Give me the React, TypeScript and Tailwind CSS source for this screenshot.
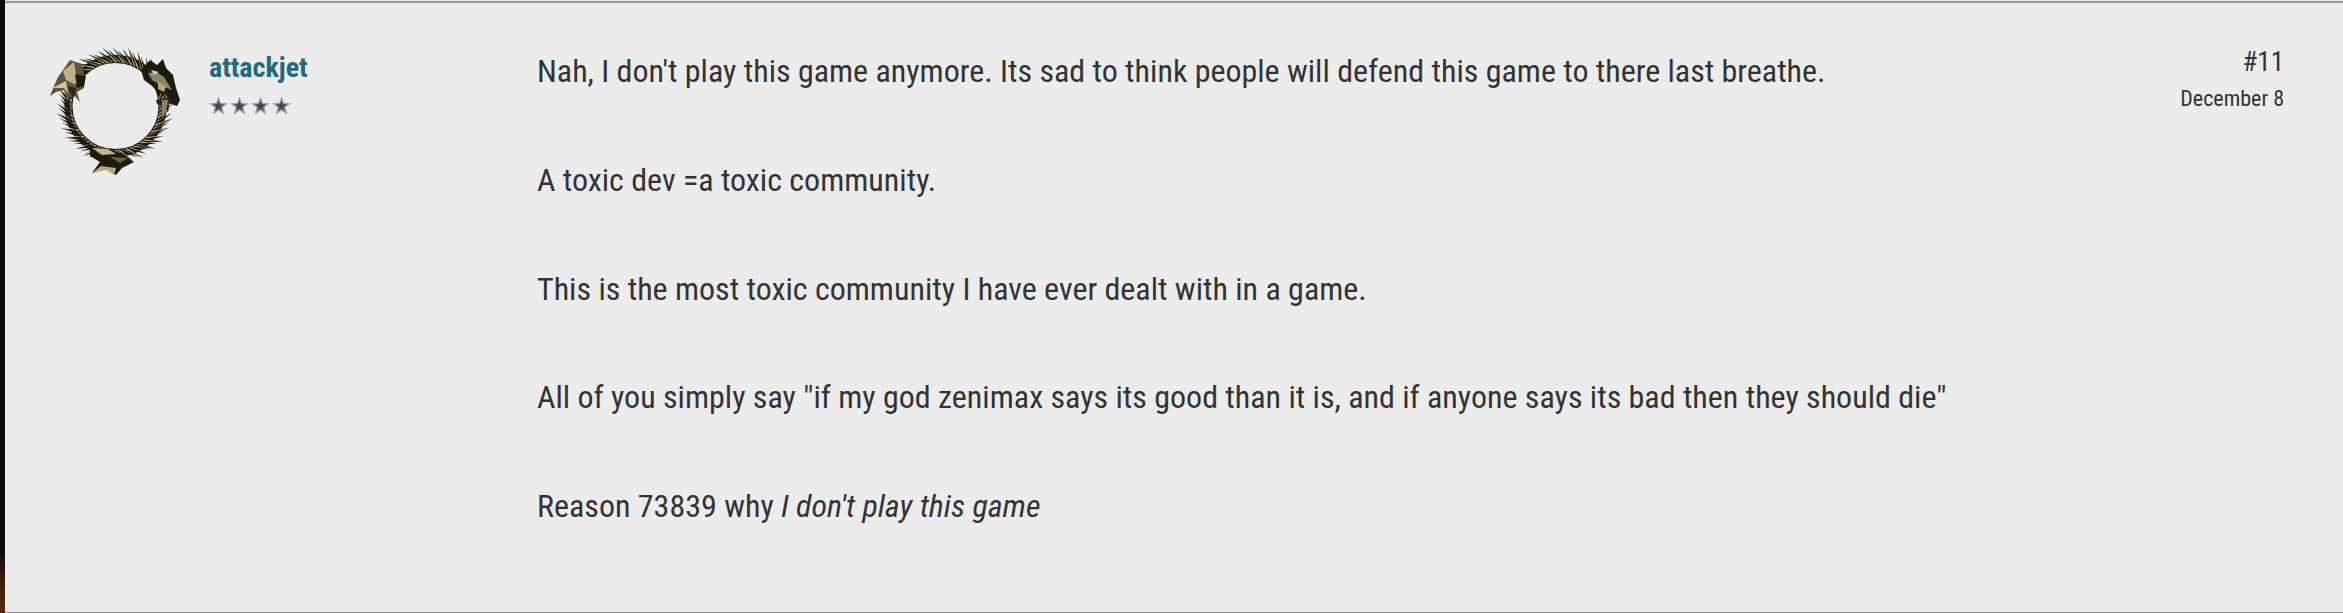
import React from 'react';

const paragraphs = [
  "Nah, I don't play this game anymore. Its sad to think people will defend this game to there last breathe.",
  'A toxic dev =a toxic community.',
  'This is the most toxic community I have ever dealt with in a game.',
  'All of you simply say "if my god zenimax says its good than it is, and if anyone says its bad then they should die"',
];

const CX = 85.5;
const CY = 66;

// point on the ring, angle in degrees (0 = right, clockwise)
const pt = (deg: number, r: number) => {
  const a = (deg * Math.PI) / 180;
  return `${(CX + Math.cos(a) * r).toFixed(1)},${(CY + Math.sin(a) * r).toFixed(1)}`;
};

const GOLD = ['#a99e74', '#d0c69e', '#7d7355', '#bdb288'];

// slanted scales of the body: a dark spine with a wider gold sliver on top
const feathers = (from: number, to: number, step: number, lean: number, len: number) => {
  const out: React.ReactElement[] = [];
  let i = 0;
  for (let d = from; d < to; d += step) {
    const l = len + ((i * 7) % 5) - 2;
    out.push(
      <polygon
        key={`d${from}-${d}`}
        points={`${pt(d - 3, 46)} ${pt(d + 3, 46)} ${pt(d + lean, 46 + l)}`}
        fill="#1b1710"
      />,
      <polygon
        key={`g${from}-${d}`}
        points={`${pt(d - 0.5, 44)} ${pt(d + 2.5, 44)} ${pt(d + lean + 1, 44 + l)}`}
        fill={GOLD[i % GOLD.length]}
      />,
    );
    i++;
  }
  return out;
};

const Ouroboros = () => (
  <svg viewBox="0 0 160 150" className="w-[160px] h-[150px] block">
    <circle cx={CX} cy={CY} r="47" fill="none" stroke="#1f1b13" strokeWidth="8" />
    {feathers(-125, -35, 5, -13, 12)}
    {feathers(-10, 92, 5, -13, 11)}
    {feathers(100, 215, 5, 13, 12)}
    {/* upper right head */}
    <polygon points="111,30 120,20 127,25 133,19 136,28 143,35 146,48 150,60 147,66 138,63 136,54 128,52 122,46 114,40" fill="#1d1a12" />
    <polygon points="118,33 126,32 134,37 142,50 132,46 122,40" fill="#8d8360" />
    <polygon points="121,30 129,32 124,35" fill="#c9ccd0" />
    <polygon points="128,42 136,46 134,52 128,49" fill="#b3a87e" />
    <polygon points="126,60 140,58 138,72 133,66 127,64" fill="#2a251a" />
    <polygon points="132,60 138,60 136,72 132,78" fill="#8d8360" />
    {/* upper left head */}
    <polygon points="28,37 33,30 40,20 52,24 55,38 54,48 47,52 50,62 42,53 37,62 34,50 26,52 20,56 24,46" fill="#5f5639" />
    <polygon points="33,31 44,22 46,34 52,42 44,44 36,40" fill="#bdb288" />
    <polygon points="45,34 56,36 54,46 47,48" fill="#1f1b12" />
    <polygon points="22,48 36,41 38,54 34,48" fill="#cfc59c" />
    <polygon points="38,46 46,48 44,58 40,52" fill="#2a251a" />
    {/* lower head */}
    <polygon points="60,109 76,108 92,114 104,122 92,128 86,135 76,129 62,133 70,122 60,116" fill="#1d1a12" />
    <polygon points="62,108 78,109 86,114 72,115" fill="#c2b78c" />
    <polygon points="62,133 71,126 86,128 84,135 76,130" fill="#b3a87e" />
    <polygon points="80,117 98,118 90,123" fill="#6d6344" />
  </svg>
);

const STAR = '9,0.5 11.3,6.6 17.8,6.9 12.7,11 14.5,17.5 9,13.9 3.5,17.5 5.3,11 0.2,6.9 6.7,6.6';

const Stars = () => (
  <div className="flex gap-[2px] mt-[12px]">
    {[0, 1, 2, 3].map((i) => (
      <svg key={i} viewBox="0 0 18 18" className="w-[19px] h-[19px] block">
        <polygon points={STAR} fill="#939daa" />
        <polygon points={STAR} fill="#45454a" transform="translate(9 9.5) scale(0.6) translate(-9 -9.5)" />
      </svg>
    ))}
  </div>
);

export default function App() {
  return (
    <div
      className="flex h-[613px] w-full overflow-hidden bg-[#ececec] text-[#333333]"
      style={{ fontFamily: '"Roboto Condensed", Roboto, sans-serif', fontStretch: '75%' }}
    >
      <div className="w-[5px] shrink-0 bg-[linear-gradient(to_bottom,#0b0b0b_0%,#0b0b0b_90%,#3a1a0c_94%,#5c2c14_100%)]" />
      <div className="flex-1 flex mt-px border-t-2 border-t-[#999999] border-b border-b-[#8c8c8c]">
        <div className="w-[532px] shrink-0 flex">
          <div className="w-[204px] shrink-0 pl-[25px] pt-[37px]">
            <Ouroboros />
          </div>
          <div className="pt-[49px]">
            <div className="text-[28px] leading-[32px] font-bold text-[#1f6a7d]">attackjet</div>
            <Stars />
          </div>
        </div>
        <div className="flex-1 pt-[41px]">
          {paragraphs.map((p) => (
            <p key={p} className="text-[32px] leading-[54.4px] mb-[54.4px] whitespace-nowrap">
              {p}
            </p>
          ))}
          <p className="text-[32px] leading-[54.4px] whitespace-nowrap">
            Reason 73839 why <em>I don't play this game</em>
          </p>
        </div>
        <div className="flex flex-col items-end pr-[59px] pt-[41px]">
          <div className="text-[27px] leading-[36px]">#11</div>
          <div className="text-[22px] leading-[28px] mt-[5px]">December 8</div>
        </div>
      </div>
    </div>
  );
}
